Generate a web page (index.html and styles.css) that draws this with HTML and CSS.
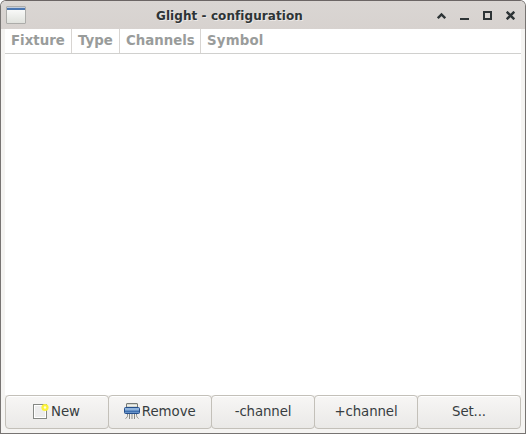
FILE: index.html
```html
<!DOCTYPE html>
<html lang="en">
<head>
<meta charset="utf-8">
<title>Glight - configuration</title>
<link rel="stylesheet" href="styles.css">
</head>
<body>
<div class="window">
  <header class="titlebar">
    <svg class="app-icon" width="20" height="18" viewBox="0 0 20 18">
      <defs><linearGradient id="pane" x1="0" y1="0" x2="0" y2="1"><stop offset="0" stop-color="#fff"/><stop offset="1" stop-color="#dfe1dc"/></linearGradient></defs>
      <rect x=".5" y=".5" width="19" height="17" rx=".5" fill="url(#pane)" stroke="#acaca9"/>
      <path d="M1 1.5H19" stroke="#c3cddc"/><path d="M1 3H19" stroke="#4b77b2" stroke-width="2"/>
    </svg>
    <h1 class="title"><span>Glight - configuration</span></h1>
    <div class="controls">
      <svg width="9" height="9" viewBox="0 0 9 9"><path d="M.8 7.2 4.5 3.5 8.2 7.2" stroke-width="2.4"/></svg>
      <svg width="9" height="9" viewBox="0 0 9 9"><path d="M0 8H9"/></svg>
      <svg width="9" height="9" viewBox="0 0 9 9"><path d="M1 1H8V8H1Z"/></svg>
      <svg width="9" height="9" viewBox="0 0 9 9"><path d="M.7 .7 8.3 8.3M8.3 .7 .7 8.3" stroke-width="2.4"/></svg>
    </div>
  </header>
  <main class="list">
    <div class="columns">
      <span class="col fixture">Fixture</span><span class="col type">Type</span><span class="col channels">Channels</span><span class="col symbol">Symbol</span>
    </div>
  </main>
  <footer class="actions">
    <button><svg class="icon-new" width="18" height="18" viewBox="0 0 18 18">
      <rect x=".5" y="2.5" width="13" height="14" fill="#ededed" stroke="#858884"/><rect x="1.5" y="3.5" width="11" height="12" fill="none" stroke="#fff"/>
      <circle cx="12" cy="5.5" r="3.6" fill="#fbf23c"/><circle cx="12" cy="5.5" r="1.2" fill="#fffde0"/>
    </svg><span class="t-new">New</span></button>
    <button><svg class="icon-remove" width="18" height="18" viewBox="0 0 18 18">
      <rect x="3.5" y="1.5" width="11" height="5" rx=".5" fill="#d3d7cf" stroke="#777a76"/><path d="M4 3.5H14" stroke="#f0f1ee"/>
      <rect x="1.5" y="5.5" width="15" height="6" rx="1" fill="#8fb3dc" stroke="#254f8c"/><path d="M2 9.5H16" stroke="#3f70b0" stroke-width="2"/>
      <path d="M4.5 12C4.5 14 5 15 2.5 16.5M6.5 12V17M9 12V17M11.5 12V17M13.5 12C13.5 14 13.5 15 15.5 16.5" fill="none" stroke="#888a85"/>
    </svg><span class="t-remove">Remove</span></button>
    <button><span class="tight">-channel</span></button>
    <button><span class="tight">+channel</span></button>
    <button><span class="tight">Set...</span></button>
  </footer>
</div>
</body>
</html>
```
FILE: styles.css
```css
* { box-sizing: border-box; }
html { background: #fff; }
body { margin: 0; font: 13.333px/18px "DejaVu Sans", sans-serif; color: #2e3436; }
.window { width: 526px; height: 434px; display: flex; flex-direction: column; overflow: hidden; background: #f5f4f2; border: 1px solid #777472; border-top-color: #6c6665; border-radius: 6px 6px 0 0; }
.titlebar { flex: none; height: 28px; display: grid; grid-template-columns: 30px 1fr 84px; align-items: center; background: linear-gradient(#dad6d3, #d7d2cf); }
.app-icon { margin-left: 5px; }
.title { margin: 0; padding: 2px 0 0 125px; font-size: 12px; line-height: 18px; letter-spacing: .07px; white-space: nowrap; text-shadow: 1px 1px #ebe8e6; }
.controls { display: flex; gap: 14px; margin-left: -4px; padding-top: 1px; }
.controls svg { fill: none; stroke: #2e3436; stroke-width: 2; }
.list { flex: 1; margin: 0 4px; background: #fff; }
.columns { display: flex; height: 25px; border-bottom: 1px solid #d0d0ce; }
.col { padding: 3px 6px 0; font-weight: bold; color: #999c9b; border-right: 1px solid #d8d5d2; white-space: nowrap; }
.fixture { width: 67px; }
.type { width: 48px; }
.channels { width: 81px; }
.symbol { border: 0; letter-spacing: .18px; }
.actions { flex: none; display: flex; height: 38px; padding: 0 4px 4px; }
button { flex: 1; height: 34px; padding: 0; display: flex; align-items: center; justify-content: center; border: 1px solid #c3c0b9; border-radius: 4px; background: linear-gradient(#f7f6f5, #eae9e7); box-shadow: inset 0 1px #fff; font: inherit; color: #373d3f; margin-right: -1px; }
button:last-child { margin-right: 0; }
button svg { margin: -3px 0 0 -1px; }
.t-remove { margin-left: .5px; letter-spacing: -.05px; }
.tight { letter-spacing: -.12px; }
```
